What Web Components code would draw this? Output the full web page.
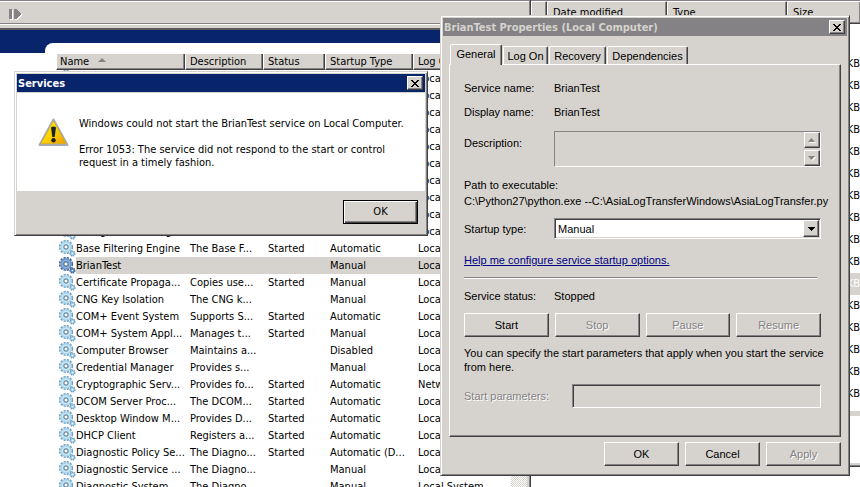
<!DOCTYPE html>
<html lang="en">
<head>
<meta charset="utf-8">
<title>Services</title>
<style>
html, body { margin: 0; height: 100%; overflow: hidden; background: #fff; }
body {
  --face: #d6d3ce; --light: #fff; --shadow: #848284; --dark: #424142; --navy: #08246b;
  --tahoma: "DejaVu Sans Condensed", "DejaVu Sans", sans-serif;
  --ms-sans: "Liberation Sans", sans-serif;
  font: 11px/16px var(--tahoma); color: #000;
}
</style>
</head>
<body>
<svc-desktop></svc-desktop>
<script>
const define = (name, html, setup) => {
  const template = document.createElement('template');
  template.innerHTML = html;
  customElements.define(name, class extends HTMLElement {
    connectedCallback() {
      if (this.shadowRoot) return;
      const root = this.attachShadow({ mode: 'open' });
      const content = template.content.cloneNode(true);
      if (setup) setup(this, content);
      root.append(content);
    }
  });
};

/* Push button */
define('win-button', `
<style>
:host { display: block; }
button {
  display: block; box-sizing: border-box; width: 100%; height: 24px; margin: 0; padding: 0;
  font: inherit; line-height: 16px; color: #000; background: var(--face);
  border: 1px solid; border-color: var(--light) var(--dark) var(--dark) var(--light);
  box-shadow: inset -1px -1px var(--shadow); border-radius: 0; text-align: center;
}
button:disabled { color: var(--shadow); text-shadow: 1px 1px var(--light); }
:host([default]) button {
  border-color: #000;
  box-shadow: inset 1px 1px var(--light), inset -1px -1px var(--dark), inset -2px -2px var(--shadow);
}
</style>
<button type="button"><slot></slot></button>`, (host, c) => {
  c.querySelector('button').disabled = host.hasAttribute('disabled');
});

/* Window frame with a title bar */
define('win-dialog', `
<style>
:host { display: block; }
.frame {
  background: var(--face); padding: 1px; border: 1px solid;
  border-color: var(--face) var(--dark) var(--dark) var(--face);
  box-shadow: inset 1px 1px var(--light), inset -1px -1px var(--shadow);
}
.inner { padding: 1px; }
header {
  display: flex; align-items: center; justify-content: space-between; height: 18px;
  padding: 0 2px 0 1px; background: var(--navy); color: #fff;
}
:host([inactive]) header { background: var(--shadow); color: var(--face); }
h1 { margin: 0; padding-top: 1px; font: bold 11px/18px var(--tahoma); white-space: nowrap; }
button {
  box-sizing: border-box; width: 16px; height: 14px; padding: 0; display: grid; place-items: center;
  background: var(--face); border: 1px solid; border-radius: 0;
  border-color: var(--light) var(--dark) var(--dark) var(--light);
  box-shadow: inset -1px -1px var(--shadow);
}
svg { display: block; }
</style>
<section class="frame"><div class="inner">
<header><h1></h1><button type="button" aria-label="Close"><svg width="10" height="9" viewBox="0 0 10 9" shape-rendering="crispEdges"><path fill="#000" d="M1 1h2v1h1v1h2v-1h1v-1h2v1h-1v1h-1v1h-1v1h1v1h1v1h1v1h-2v-1h-1v-1h-2v1h-1v1h-2v-1h1v-1h1v-1h1v-1h-1v-1h-1v-1h-1z"/></svg></button></header>
<slot></slot></div></section>`, (host, c) => {
  c.querySelector('h1').textContent = host.getAttribute('heading');
});

/* Service icon: two cog wheels */
define('svc-gears', `
<style>
:host { display: block; width: 17px; height: 17px; --rim: #6f9fc0; --fill: #a0cfe8; --edge: #c9e6f5; }
:host([dim]) { --rim: #3d6296; --fill: #5f8cc0; --edge: #8fb1da; }
</style>
<svg width="17" height="17" viewBox="0 0 17 17" aria-hidden="true">
<circle cx="7" cy="7" r="6.300" fill="none" stroke="var(--rim)" stroke-width="1.600" stroke-dasharray="2.200 1.100"/>
<circle cx="7" cy="7" r="5.700" fill="var(--fill)"/>
<circle cx="7" cy="7" r="3.800" fill="none" stroke="var(--edge)" stroke-width="1.600"/>
<circle cx="7" cy="7" r="2.100" fill="#fff" stroke="#56758f" stroke-width="1"/>
<circle cx="13.500" cy="13.500" r="2.400" fill="var(--fill)" stroke="var(--rim)" stroke-width="1.400" stroke-dasharray="1.300 .6"/>
<circle cx="13.500" cy="13.500" r=".8" fill="#fff"/>
</svg>`);

/* Services list */
define('svc-list', `
<style>
:host { display: block; overflow: hidden; }
table { width: 100%; border-collapse: separate; border-spacing: 0; table-layout: fixed; }
col.name { width: 129px; } col.desc { width: 78px; } col.status { width: 62px; } col.type { width: 88px; }
th, td { padding: 0 0 0 5px; text-align: left; font-weight: normal; white-space: nowrap; overflow: hidden; }
th {
  box-sizing: border-box; height: 16px; line-height: 15px; padding-left: 4px; background: var(--face);
  border-right: 1px solid var(--dark); border-bottom: 1px solid var(--dark); border-left: 1px solid var(--light);
  box-shadow: inset -1px -1px var(--shadow);
}
th:first-child { padding-left: 3px; }
th svg { margin-left: 9px; vertical-align: 3px; }
td { height: 17px; }
td { line-height: 16px; padding-top: 1px; height: 16px; }
td:first-child { padding: 0 0 0 3px; }
.item { display: flex; }
.item span { flex: 1; line-height: 16px; padding-top: 1px; }
tr.selected td:not(:first-child), tr.selected .item span { background: var(--face); }
</style>
<table>
<colgroup><col class="name"><col class="desc"><col class="status"><col class="type"><col></colgroup>
<thead><tr><th>Name<svg width="8" height="4" viewBox="0 0 8 4" aria-hidden="true"><path d="M4 0l4 4H0z" fill="#848284"/></svg></th><th>Description</th><th>Status</th><th>Startup Type</th><th>Log On</th></tr></thead>
<tbody></tbody></table>`, (host, c) => {
  const blank = ['', '', '', '', 'Local'];
  const rows = [
    ...Array(9).fill(blank),
    ['Background Intelligen...', '', '', '', 'Local'],
    ['Base Filtering Engine', 'The Base F...', 'Started', 'Automatic', 'Local'],
    ['BrianTest', '', '', 'Manual', 'Local'],
    ['Certificate Propaga...', 'Copies use...', 'Started', 'Manual', 'Local'],
    ['CNG Key Isolation', 'The CNG k...', '', 'Manual', 'Local'],
    ['COM+ Event System', 'Supports S...', 'Started', 'Automatic', 'Local'],
    ['COM+ System Appl...', 'Manages t...', 'Started', 'Manual', 'Local'],
    ['Computer Browser', 'Maintains a...', '', 'Disabled', 'Local'],
    ['Credential Manager', 'Provides s...', '', 'Manual', 'Local'],
    ['Cryptographic Serv...', 'Provides fo...', 'Started', 'Automatic', 'Netw'],
    ['DCOM Server Proc...', 'The DCOM...', 'Started', 'Automatic', 'Local'],
    ['Desktop Window M...', 'Provides D...', 'Started', 'Automatic', 'Local'],
    ['DHCP Client', 'Registers a...', 'Started', 'Automatic', 'Local'],
    ['Diagnostic Policy Se...', 'The Diagno...', 'Started', 'Automatic (D...', 'Local'],
    ['Diagnostic Service ...', 'The Diagno...', '', 'Manual', 'Local'],
    ['Diagnostic System ...', 'The Diagno...', '', 'Manual', 'Local System']
  ];
  c.querySelector('tbody').innerHTML = rows.map(r => {
    const on = r[0] === 'BrianTest';
    return `<tr${on ? ' class="selected"' : ''}><td><div class="item"><svc-gears${on ? ' dim' : ''}></svc-gears><span>${r[0]}</span></div></td>` +
      r.slice(1).map(t => `<td>${t}</td>`).join('') + '</tr>';
  }).join('');
});

/* Management console window */
define('svc-console', `
<style>
:host { display: flex; flex-direction: column; min-width: 0; overflow: hidden; background: var(--face);
  box-sizing: border-box; border-right: 1px solid var(--dark); padding-right: 1px; box-shadow: inset -1px 0 var(--shadow); }
.tools { flex: none; height: 22px; border-top: 1px solid var(--shadow); border-bottom: 1px solid var(--shadow);
  box-shadow: inset 0 1px var(--light), 0 1px var(--light); display: flex; align-items: center; padding: 0 8px; }
.tools button { padding: 0; border: 0; background: none; margin-top: 4px; display: block; height: 13px; }
svg { display: block; }
.body { flex: 1; min-height: 0; margin: 4px 2px 0 0; border-top: 2px solid #5a595a; display: flex; background: #fff; overflow: hidden; }
.band { flex: 1; min-width: 0; display: flex; flex-direction: column; background: linear-gradient(var(--navy) 23px, #fff 23px); }
.pane { flex: 1; min-height: 0; margin: 13px 0 0 45px; padding: 11px 0 0 11px; display: flex;
  border-top-left-radius: 8px; background: #fff; overflow: hidden; }
svc-list { flex: 1; min-width: 0; }
.scroll { flex: none; width: 16px; background: repeating-conic-gradient(var(--face) 0 25%, #fff 0 50%) 0 0 / 2px 2px; }
</style>
<div class="tools"><button type="button" aria-label="Start service"><svg width="14" height="13" viewBox="0 0 14 13" shape-rendering="crispEdges"><path d="M2 2h3v10H2zM7 2h3l4 5-5 5H7z" fill="#fff"/><path d="M1 1h3v10H1zM6 1h2l5 5-5 5H6z" fill="#848284"/></svg></button></div>
<div class="body"><div class="band"><div class="pane"><svc-list></svc-list><div class="scroll"></div></div></div></div>`);

/* File browser window */
define('file-browser', `
<style>
:host { display: block; min-width: 0; overflow: hidden; background: #fff; border-top: 1px solid var(--shadow); }
table { width: 100%; border-spacing: 0; table-layout: fixed; }
th { height: 22px; padding: 0 0 0 5px; text-align: left; font-weight: normal; line-height: 21px; background: var(--face);
  border-top: 1px solid var(--light); border-right: 1px solid var(--dark); border-bottom: 1px solid var(--dark);
  border-left: 1px solid var(--light); box-sizing: border-box; box-shadow: inset -1px -1px var(--shadow); }
th:last-child { border-right: 0; }
td { height: 22px; padding: 0; text-align: right; line-height: 22px; }
tr.gap td { height: 29px; }
tr.selected td { background: var(--face); color: #fff; }
.bar { margin-top: 6px; height: 5px; background: var(--face); }
.status { height: 50px; border-bottom: 1px solid var(--dark); box-shadow: inset 0 -1px var(--shadow), inset 0 -3px var(--face); }
</style>
<table>
<colgroup><col style="width:16px"><col style="width:120px"><col style="width:120px"><col></colgroup>
<thead><tr><th></th><th>Date modified</th><th>Type</th><th>Size</th></tr></thead>
<tbody><tr class="gap"><td colspan="4"></td></tr></tbody></table>
<div class="bar"></div><div class="status"></div>`, (host, c) => {
  c.querySelector('tbody').insertAdjacentHTML('beforeend', Array.from({ length: 16 }, (_, i) =>
    `<tr${i === 10 ? ' class="selected"' : ''}><td></td><td></td><td></td><td>KB</td></tr>`).join(''));
});

/* Error message */
define('error-box', `
<style>
:host { display: block; }
.message { display: flex; gap: 10px; margin-top: 1px; padding: 24px 20px 21px 21px; background: #fff; }
.message svg { flex: none; margin-top: 1px; }
p { margin: 0 0 13px; line-height: 13px; }
p:last-child { margin-bottom: 0; }
.text { white-space: nowrap; padding-bottom: 1px; }
.actions { display: flex; justify-content: flex-end; padding: 9px 7px 9px; }
win-button { width: 75px; }
</style>
<win-dialog heading="Services">
<div class="message">
<svg width="31" height="29" viewBox="0 0 31 29" role="img" aria-label="Warning">
<defs><linearGradient id="y" x1="0" y1="0" x2="1" y2="1"><stop offset="0" stop-color="#fff200"/><stop offset=".5" stop-color="#fbd500"/><stop offset="1" stop-color="#f09a00"/></linearGradient></defs>
<path d="M15.500 1.500L29.500 27H1.500z" fill="#c6c7ce" stroke="#a9abb3" stroke-width="2" stroke-linejoin="round"/>
<path d="M15.500 3L28 25.500H3z" fill="url(#y)" stroke="#d8a800" stroke-width=".6"/>
<path d="M13 9.500q2.500-2 5 0l-1.300 9.500h-2.400z" fill="#1c2030"/><circle cx="15.500" cy="22.200" r="2.200" fill="#1c2030"/>
</svg>
<div class="text"><p>Windows could not start the BrianTest service on Local Computer.</p>
<p>Error 1053: The service did not respond to the start or control<br>request in a timely fashion.</p></div>
</div>
<div class="actions"><win-button default>OK</win-button></div>
</win-dialog>`);

/* Service properties */
define('service-properties', `
<style>
:host { display: block; font-family: var(--ms-sans); }
.sheet { padding: 8px 6px 7px; }
.tabs { display: flex; align-items: flex-end; gap: 1px; padding-left: 1px; height: 20px; }
.tabs button {
  flex: none; box-sizing: border-box; height: 18px; padding: 0; font: inherit; color: inherit; background: var(--face);
  border: 1px solid; border-color: var(--light) var(--dark) transparent var(--light); border-bottom: 0;
  border-radius: 2px 2px 0 0; box-shadow: inset -1px 0 var(--shadow); white-space: nowrap;
}
.tabs button[aria-selected=true] { height: 21px; margin-bottom: -1px; padding-bottom: 2px; position: relative; }
.page {
  padding: 11px 19px 28px 14px; border: 1px solid;
  border-color: var(--light) var(--dark) var(--dark) var(--light); box-shadow: inset -1px -1px var(--shadow);
}
.row { display: flex; align-items: center; min-height: 24px; }
.row > :first-child { flex: none; width: 90px; }
.row > :last-child { flex: 1; min-width: 0; }
.desc { align-items: flex-start; margin: 7px 0 10px; }
.desc label { padding-top: 4px; }
.area { display: flex; border: 1px solid; border-color: var(--shadow) var(--light) var(--light) var(--shadow); height: 34px; }
textarea { flex: 1; min-width: 0; border: 0; padding: 0; margin: 0; background: none; resize: none; font: inherit; outline: 0; overflow: hidden; }
.spin { width: 16px; display: flex; flex-direction: column; gap: 2px; }
.spin button { flex: 1; padding: 0; background: var(--face); border: 1px solid; border-radius: 0; display: grid; place-items: center;
  border-color: var(--light) var(--dark) var(--dark) var(--light); box-shadow: inset -1px -1px var(--shadow); }
.path { white-space: nowrap; }
.startup { margin-top: 9px; min-height: 21px; }
.combo { display: grid; height: 21px; }
.combo > * { grid-area: 1 / 1; }
select { appearance: none; box-sizing: border-box; width: 100%; height: 21px; margin: 0; padding: 0 20px 0 3px; border-radius: 0; font: inherit; color: #000;
  background: #fff; border: 1px solid; border-color: var(--shadow) var(--light) var(--light) var(--shadow);
  box-shadow: inset 1px 1px var(--dark), inset -1px -1px var(--face); }
.arrow { justify-self: end; align-self: center; margin-right: 2px; box-sizing: border-box; width: 16px; height: 17px; background: var(--face);
  border: 1px solid; border-color: var(--light) var(--dark) var(--dark) var(--light); box-shadow: inset -1px -1px var(--shadow);
  display: grid; place-items: center; pointer-events: none; }
svg { display: block; }
.help { margin-top: 13px; }
a { color: #000084; }
hr { margin: 9px 4px 9px 0; border: 0; border-top: 1px solid var(--shadow); border-bottom: 1px solid var(--light); }
.status { min-height: 16px; }
.buttons { display: grid; grid-template-columns: repeat(4, 1fr); gap: 6px; margin: 9px 0; }
p { margin: 0; line-height: 14px; white-space: nowrap; }
.params { margin-top: 10px; }
.params > :first-child { width: 108px; color: var(--shadow); text-shadow: 1px 1px var(--light); }
input { box-sizing: border-box; height: 24px; margin: 0; padding: 0 3px; font: inherit; border-radius: 0; background: var(--face);
  border: 1px solid; border-color: var(--shadow) var(--light) var(--light) var(--shadow); box-shadow: inset 1px 1px var(--dark); }
.footer { display: flex; justify-content: flex-end; gap: 6px; margin-top: 5px; }
.footer win-button { width: 75px; }
</style>
<win-dialog heading="BrianTest Properties (Local Computer)" inactive>
<div class="sheet">
<div class="tabs" role="tablist">
<button role="tab" aria-selected="true" style="width:52px">General</button><button role="tab" style="width:45px">Log On</button><button role="tab" style="width:57px">Recovery</button><button role="tab" style="width:81px">Dependencies</button>
</div>
<div class="page">
<div class="row"><span>Service name:</span><span>BrianTest</span></div>
<div class="row"><span>Display name:</span><span>BrianTest</span></div>
<div class="row desc"><label for="desc">Description:</label><div class="area"><textarea id="desc" readonly></textarea><div class="spin">
<button type="button" disabled aria-label="Scroll up"><svg width="8" height="5" viewBox="0 0 8 5"><path d="M4 1l4 4H1z" fill="#fff"/><path d="M3.500 0L7 4H0z" fill="#848284"/></svg></button>
<button type="button" disabled aria-label="Scroll down"><svg width="8" height="5" viewBox="0 0 8 5"><path d="M8 1L4.500 5 1 1z" fill="#fff"/><path d="M7 0L3.500 4 0 0z" fill="#848284"/></svg></button></div></div></div>
<div>Path to executable:</div>
<div class="path">C:\\Python27\\python.exe --C:\\AsiaLogTransferWindows\\AsiaLogTransfer.py</div>
<div class="row startup"><label for="type">Startup type:</label><div class="combo"><select id="type"><option>Manual</option><option>Automatic</option><option>Disabled</option></select><span class="arrow"><svg width="7" height="4" viewBox="0 0 7 4" shape-rendering="crispEdges"><path d="M0 0h7v1H6v1H5v1H4v1H3V3H2V2H1V1H0z"/></svg></span></div></div>
<div class="help"><a href="#help">Help me configure service startup options.</a></div>
<hr>
<div class="row status"><span>Service status:</span><span>Stopped</span></div>
<div class="buttons"><win-button>Start</win-button><win-button disabled>Stop</win-button><win-button disabled>Pause</win-button><win-button disabled>Resume</win-button></div>
<p>You can specify the start parameters that apply when you start the service<br>from here.</p>
<div class="row params"><label for="params">Start parameters:</label><input id="params" type="text" disabled></div>
</div>
<div class="footer"><win-button>OK</win-button><win-button>Cancel</win-button><win-button disabled>Apply</win-button></div>
</div>
</win-dialog>`);

/* Desktop: two tiled windows with two dialogs floating over them */
define('svc-desktop', `
<style>
:host { display: grid; grid-template-columns: 531fr 329fr; grid-template-rows: 100vh; position: relative; height: 100vh; overflow: hidden; }
error-box, service-properties { position: absolute; }
error-box { left: 14px; top: 71px; width: 414px; }
service-properties { left: 440px; top: 15px; width: 410px; }
</style>
<svc-console></svc-console>
<file-browser></file-browser>
<error-box></error-box>
<service-properties></service-properties>`);
</script>
</body>
</html>
